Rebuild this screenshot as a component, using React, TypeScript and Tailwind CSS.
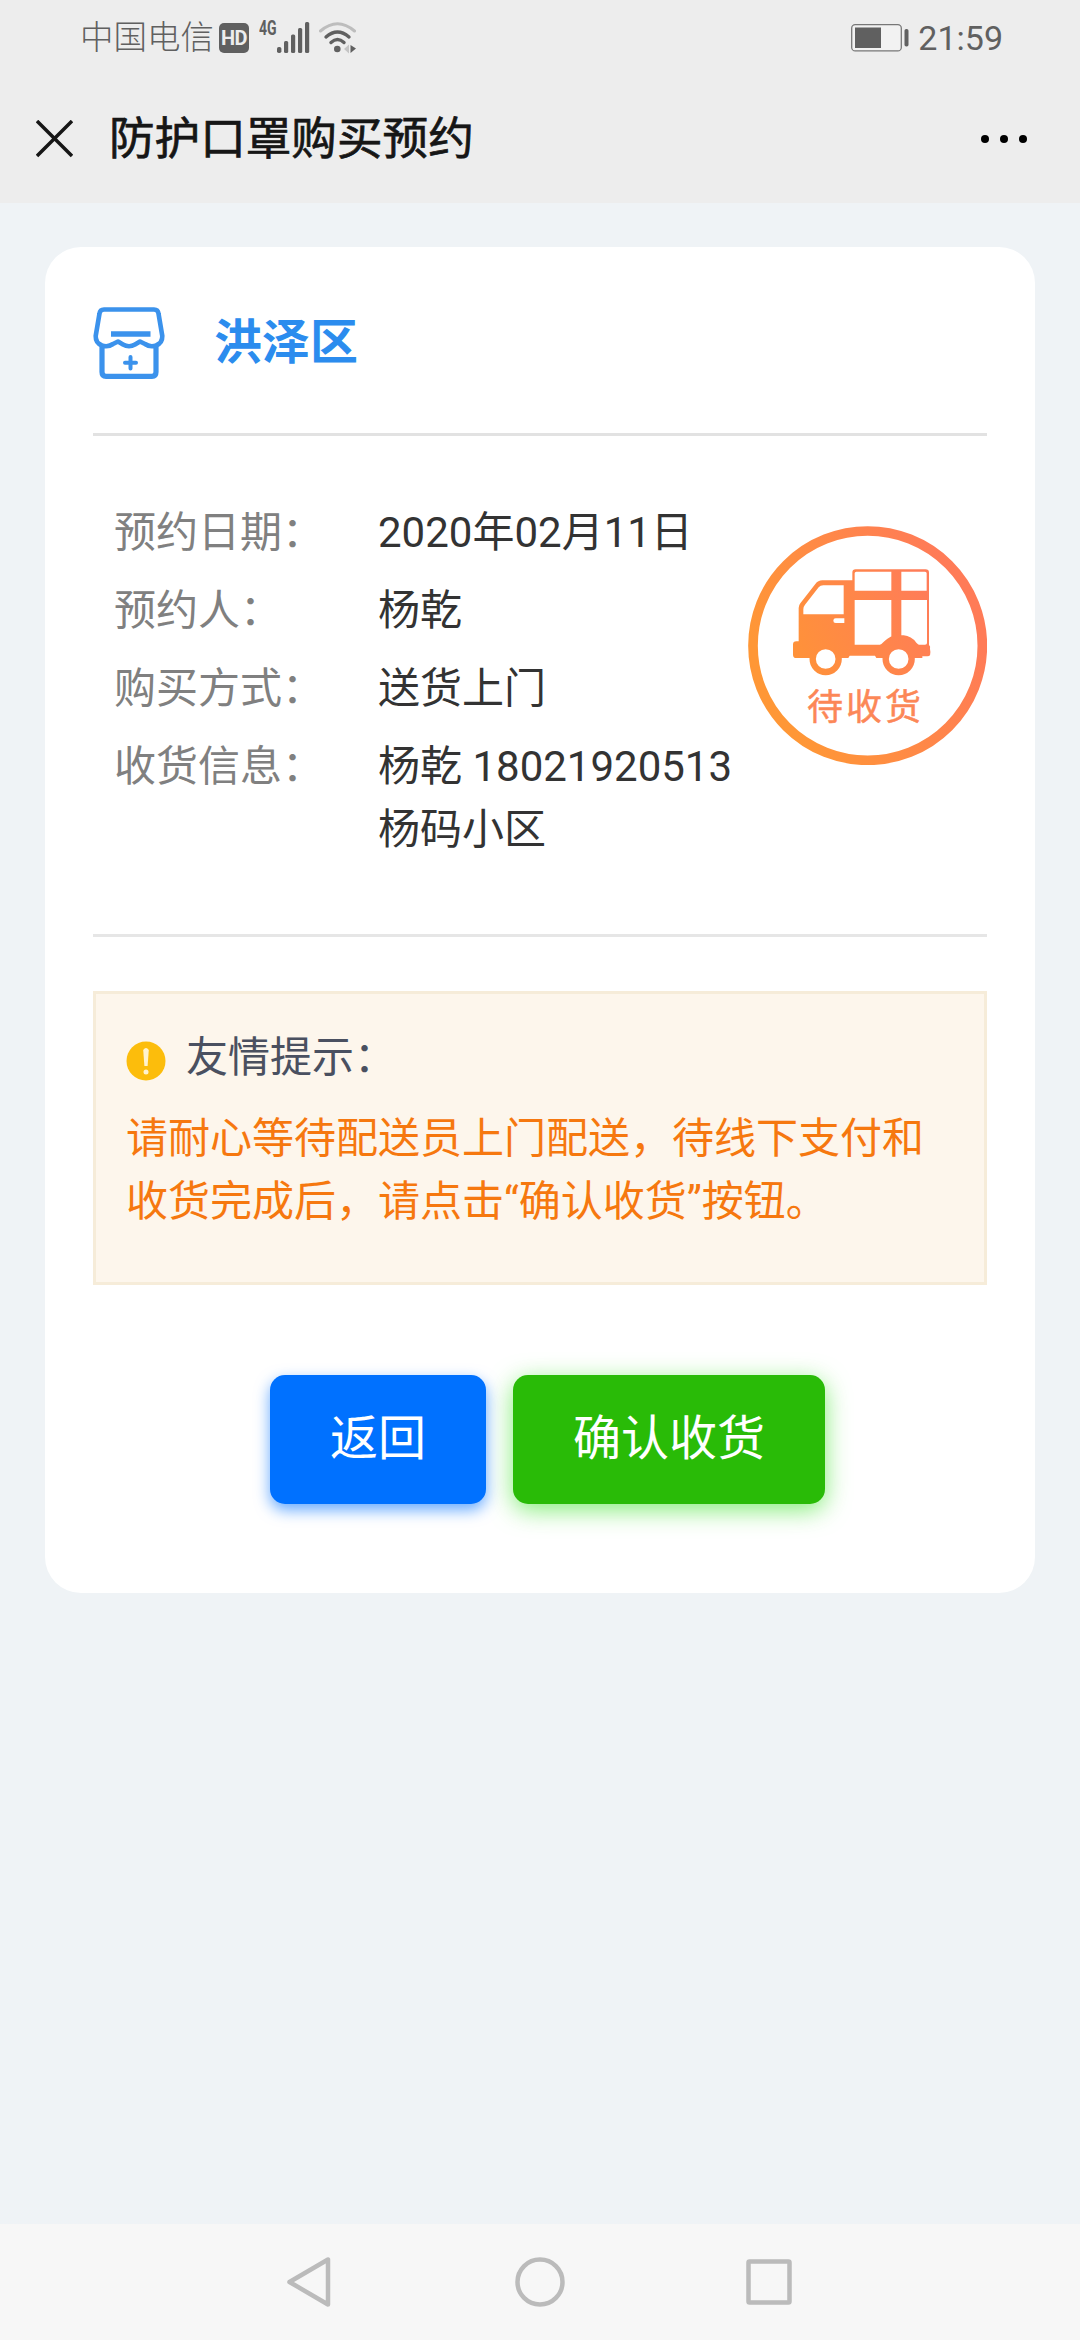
import React from 'react'

interface InfoRow {
  label: string
  lines: string[]
}

const rows: InfoRow[] = [
  { label: '预约日期：', lines: ['2020年02月11日'] },
  { label: '预约人：', lines: ['杨乾'] },
  { label: '购买方式：', lines: ['送货上门'] },
  { label: '收货信息：', lines: ['杨乾 18021920513', '杨码小区'] },
]

const SignalIcon = () => (
  <svg width="33" height="31" viewBox="0 0 33 31" fill="#606060">
    <rect x="0" y="25" width="4.4" height="6" rx="1.8" />
    <rect x="7" y="19" width="4.2" height="12" rx="1.5" />
    <rect x="14" y="12.5" width="4.2" height="18.5" rx="1.5" />
    <rect x="21" y="6" width="4.2" height="25" rx="1.5" />
    <rect x="28" y="0" width="4.2" height="31" rx="1.5" />
  </svg>
)

const WifiIcon = () => (
  <svg width="38" height="32" viewBox="0 0 38 32" fill="none" strokeLinecap="round">
    <path d="M1.5 9 Q18.5 -5.5 35.5 9" stroke="#bdbdbd" strokeWidth="3" />
    <path d="M7 15 Q18.5 5 30 15" stroke="#606060" strokeWidth="3.4" />
    <path d="M12 20.5 Q18.5 14.5 25 20.5" stroke="#606060" strokeWidth="3.4" />
    <circle cx="18.3" cy="27" r="3.3" fill="#606060" />
    <path d="M30 22.5 V31.5 L25 27 Z" fill="#c4c4c4" />
    <path d="M31.5 23 L37 26.5 L31.5 31 Z" fill="#606060" />
  </svg>
)

const BatteryIcon = () => (
  <svg width="59" height="28" viewBox="0 0 59 28">
    <rect x="0.7" y="0.7" width="49.6" height="26.2" rx="3.5" fill="#f2f2f2" stroke="#777" strokeWidth="1.3" />
    <rect x="4" y="3.5" width="26" height="20.5" fill="#606060" />
    <rect x="53.5" y="5" width="4" height="17.5" rx="1.8" fill="#606060" />
  </svg>
)

const ShopIcon = () => (
  <svg width="72" height="72" viewBox="0 0 72 72" fill="none" stroke="#3b92ec" strokeWidth="5.2" strokeLinecap="round" strokeLinejoin="round">
    <path d="M9 40 V65 Q9 69.300 13 69.300 H59 Q63 69.300 63 65 V40" />
    <path
      d="M11 2.500 H61 Q65 2.500 65.500 6.500 L69.300 29 Q69.500 36 63 38.500 Q57 40.500 52 37 L47 34.500 L42 37.500 Q36 41 30 37.500 L25 34.500 L20 37 Q15 40.500 9 38.500 Q2.500 36 2.700 29 L6.500 6.500 Q7 2.500 11 2.500 Z"
      strokeWidth="4.600"
    />
    <path d="M18 27 H57.500" strokeLinecap="butt" strokeWidth="5.600" />
    <path d="M37.500 50 V61.500 M32 55.700 H43" strokeWidth="4" />
  </svg>
)

const PendingStamp = () => (
  <svg className="block size-[239px]" viewBox="51 76 717 717">
    <defs>
      <linearGradient id="ring" gradientUnits="userSpaceOnUse" x1="130" y1="560" x2="690" y2="300">
        <stop offset="0" stopColor="#ff9736" />
        <stop offset="1" stopColor="#ff7b57" />
      </linearGradient>
      <linearGradient id="truck" gradientUnits="userSpaceOnUse" x1="200" y1="480" x2="600" y2="300">
        <stop offset="0" stopColor="#ff9239" />
        <stop offset="1" stopColor="#ff7c58" />
      </linearGradient>
    </defs>
    <circle cx="410" cy="435" r="344" fill="none" stroke="url(#ring)" strokeWidth="29" />
    <path
      fill="url(#truck)"
      fillRule="evenodd"
      d="M203 422 V322 Q203 314 208 308 L253 250 Q261 239 274 239 H364 V216 Q364 206 374 206 H583 Q594 206 594 216 V433 Q599 436 597 445 Q602 468 588 467 H574 V472 H436 L432 465 H356 L352 472 H196 Q186 472 186 462 V432 Q186 422 196 422 Z
      M217 341 H338 V254 H277 Q268 254 263 260 L222 312 Q217 318 217 326 Z
      M314 353 Q307 353 307 360 Q307 367 314 367 H340 V353 Z
      M376 213 Q371 213 371 218 V270 H481 V213 Z
      M511 213 V270 H587 V218 Q587 213 582 213 Z
      M371 298 V432 H481 V298 Z
      M511 298 V432 H582 Q588 432 588 427 V298 Z"
    />
    <path d="M436 440 Q452 432 460 422 Q478 404 500 404 H518 Q541 406 556 426 Q562 434 575 438 V455 H436 Z" fill="url(#truck)" />
    <g fill="#fff" stroke="url(#truck)" strokeWidth="19">
      <circle cx="284" cy="475" r="39" />
      <circle cx="503" cy="475" r="39" />
    </g>
    <text x="228" y="658" fontSize="108" letterSpacing="9" fill="#fc8757" stroke="#fc8757" strokeWidth="1.5">
      待收货
    </text>
  </svg>
)

const StatusBar = () => (
  <div className="flex h-[72px] items-center pt-[3px] pr-[77px] pl-[80px] text-[34px] leading-none text-[#606060]">
    <span className="text-[33.5px] font-light">中国电信</span>
    <span className="ml-[5px] flex h-[30px] w-[30px] items-center justify-center rounded-[5px] bg-[#606060] text-[20px] font-bold tracking-[-0.5px] text-[#ededed]">
      HD
    </span>
    <span className="ml-[10px] w-[18px] origin-left scale-x-70 self-start pt-[15px] text-[20px] font-bold">4G</span>
    <SignalIcon />
    <span className="ml-[9px]">
      <WifiIcon />
    </span>
    <span className="mr-[8px] ml-auto">
      <BatteryIcon />
    </span>
    <span>21:59</span>
  </div>
)

const TitleBar = () => (
  <div className="flex h-[131px] items-center pt-[2px] pr-[53px] pl-[36px]">
    <svg width="37" height="38" viewBox="0 0 37 38" stroke="#161616" strokeWidth="3.5">
      <path d="M1 1 L36 36 M36 1 L1 36" />
    </svg>
    <h1 className="ml-[36px] pt-[2px] text-[45.6px] leading-none font-normal text-[#161616] [-webkit-text-stroke:0.7px_#161616]">
      防护口罩购买预约
    </h1>
    <div className="ml-auto flex gap-[11px]">
      <i className="size-2 rounded-full bg-black" />
      <i className="size-2 rounded-full bg-black" />
      <i className="size-2 rounded-full bg-black" />
    </div>
  </div>
)

const NavBar = () => (
  <div className="flex h-[116px] items-center justify-between bg-[#f7f7f7] pr-[286px] pl-[285px]">
    <svg width="48" height="52" viewBox="0 0 48 52" fill="none" stroke="#bbb" strokeWidth="4.5" strokeLinejoin="round">
      <path d="M4.5 26 L43 3.5 V48.5 Z" />
    </svg>
    <svg width="50" height="50" viewBox="0 0 50 50" fill="none" stroke="#bbb" strokeWidth="4.5">
      <circle cx="25" cy="25" r="22.5" />
    </svg>
    <svg width="48" height="46" viewBox="0 0 48 46" fill="none" stroke="#bbb" strokeWidth="4.5" strokeLinejoin="round">
      <rect x="2.5" y="2.5" width="41" height="41" rx="1" />
    </svg>
  </div>
)

const App: React.FC = () => {
  return (
    <div className="flex h-[2340px] w-[1080px] flex-col bg-[#eff3f6] font-[Roboto,'Noto_Sans_CJK_SC',sans-serif]">
      <header className="bg-[#ededed]">
        <StatusBar />
        <TitleBar />
      </header>

      <main className="flex-1 px-[45px] pt-[44px]">
        <section className="h-[1346px] rounded-[36px] bg-white px-12">
          <div className="flex h-[189px] items-center border-b-3 border-[#e2e2e2] pt-[5px]">
            <ShopIcon />
            <h2 className="ml-[49px] text-[48px] leading-none font-bold text-[#2b8cee]">洪泽区</h2>
          </div>

          <div className="flex h-[501px] justify-between border-b-3 border-[#e6e6e6] pt-[65px] pl-[21px] text-[42px] leading-[63px]">
            <dl className="flex flex-col gap-[15px]">
              {rows.map((row) => (
                <div key={row.label} className="flex">
                  <dt className="w-[264px] text-[#808080]">{row.label}</dt>
                  <dd className="whitespace-nowrap text-[#333]">
                    {row.lines.map((line) => (
                      <div key={line}>{line}</div>
                    ))}
                  </dd>
                </div>
              ))}
            </dl>
            <div className="-ml-4 pt-[25px]">
              <PendingStamp />
            </div>
          </div>

          <div className="mt-[54px] h-[294px] border-3 border-[#f6ecd9] bg-[#fdf6ec] px-[30px] pt-[32px] text-[42px] leading-[63px]">
            <div className="flex items-center text-[#4a5060]">
              <svg className="mt-[7px] mr-[20px]" width="40" height="40" viewBox="0 0 40 40">
                <circle cx="20" cy="20" r="19.5" fill="#fcbd0c" />
                <path d="M17.2 9 Q20 5 22.8 9 L21.6 25 H18.4 Z" fill="#fff3cf" />
                <circle cx="20" cy="31" r="2.5" fill="#fff3cf" />
              </svg>
              友情提示：
            </div>
            <p className="mt-[18px] whitespace-nowrap text-[#f6780f]">
              请耐心等待配送员上门配送，待线下支付和
              <br />
              收货完成后，请点击“确认收货”按钮。
            </p>
          </div>

          <div className="mt-[90px] flex gap-[27px] pl-[177px] text-[48px] leading-none text-white">
            <button className="h-[129px] w-[216px] rounded-[15px] bg-[#0071ff] pb-px shadow-[0_6px_15px_rgba(0,113,255,0.6)]">
              返回
            </button>
            <button className="h-[129px] w-[312px] rounded-[15px] bg-[#29bb07] pb-px shadow-[0_6px_24px_rgba(50,225,30,0.6)]">
              确认收货
            </button>
          </div>
        </section>
      </main>

      <NavBar />
    </div>
  )
}

export default App
